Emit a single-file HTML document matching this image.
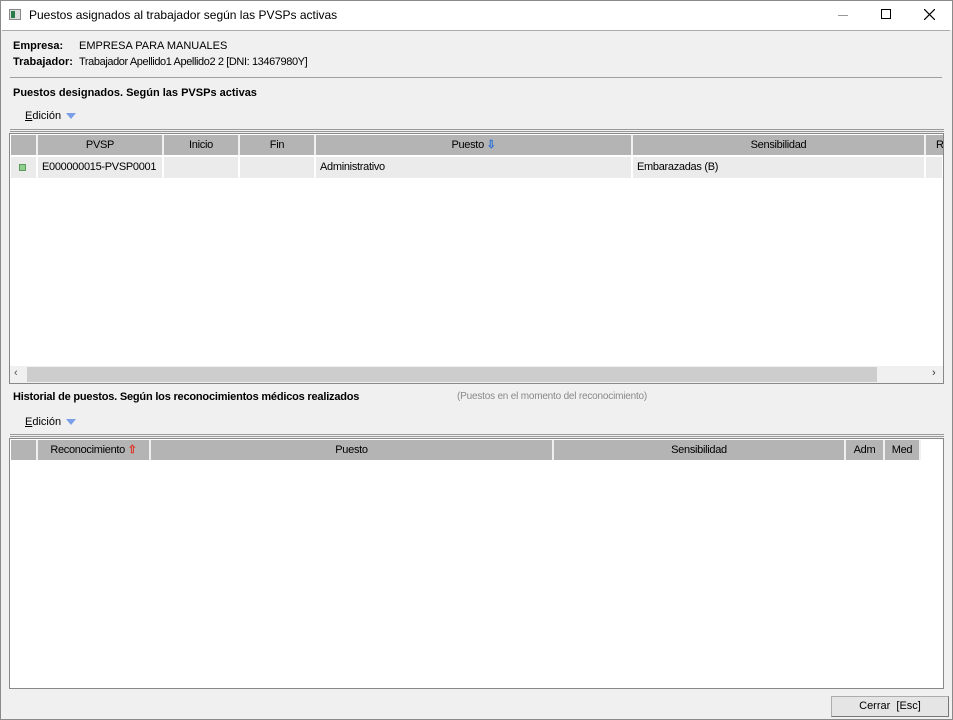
<!DOCTYPE html>
<html><head><meta charset="utf-8"><style>
*{margin:0;padding:0;box-sizing:border-box}
body{width:953px;height:720px;position:relative;background:#f0f0f0;font-family:"Liberation Sans",sans-serif;font-size:11px;color:#000;overflow:hidden}
.a{position:absolute}
.t{white-space:nowrap}
.hd{position:absolute;top:0;height:20px;background:#b4b4b4;border-right:2px solid #f0f0f0;text-align:center;line-height:20px;font-size:11px;letter-spacing:-0.3px;overflow:hidden}
.cell{position:absolute;top:0;height:21px;background:#ebebeb;border-right:2px solid #fff;line-height:21px;padding-left:4px;letter-spacing:-0.3px}
</style></head><body>
<div class="a" style="left:0;top:0;width:953px;height:720px;border:1px solid #8a8a8a"></div>
<div class="a" style="left:1px;top:1px;width:951px;height:29px;background:#fff"></div>
<div class="a" style="left:9px;top:9px;width:12px;height:11px;border:1px solid #888;background:#ddd"></div>
<div class="a" style="left:11px;top:11px;width:4px;height:7px;background:#2a7a4a"></div>
<div class="a t" style="left:29px;top:8px;font-size:12px">Puestos asignados al trabajador según las PVSPs activas</div>
<div class="a" style="left:838px;top:15px;width:10px;height:1px;background:#999"></div>
<div class="a" style="left:881px;top:9px;width:10px;height:10px;border:1px solid #000"></div>
<svg class="a" style="left:924px;top:9px" width="11" height="11"><path d="M0 0L11 11M11 0L0 11" stroke="#000" stroke-width="1.2"/></svg>
<div class="a" style="left:2px;top:30px;width:948px;height:1px;background:#aaa"></div>

<div class="a t" style="left:13px;top:40px;font-weight:bold">Empresa:</div>
<div class="a t" style="left:79px;top:40px">EMPRESA PARA MANUALES</div>
<div class="a t" style="left:13px;top:56px;font-weight:bold">Trabajador:</div>
<div class="a t" style="left:79px;top:56px;letter-spacing:-0.4px">Trabajador Apellido1 Apellido2 2 [DNI: 13467980Y]</div>
<div class="a" style="left:10px;top:77px;width:932px;height:1px;background:#a0a0a0"></div>
<div class="a t" style="left:13px;top:87px;font-weight:bold">Puestos designados. Según las PVSPs activas</div>
<div class="a t" style="left:25px;top:110px"><u>E</u>dición</div>
<div class="a" style="left:66px;top:113px;width:0;height:0;border-left:5px solid transparent;border-right:5px solid transparent;border-top:6px solid #7a9ee8"></div>
<div class="a" style="left:10px;top:129px;width:934px;height:3px;border-top:1px solid #999;border-bottom:1px solid #999"></div>

<div class="a" style="left:9px;top:133px;width:935px;height:251px;background:#fff;border:1px solid #888;overflow:hidden">
 <div class="a" style="left:1px;top:1px;width:932px;height:20px;overflow:hidden">
  <div class="hd" style="left:0;width:27px"></div>
  <div class="hd" style="left:27px;width:126px">PVSP</div>
  <div class="hd" style="left:153px;width:76px">Inicio</div>
  <div class="hd" style="left:229px;width:76px">Fin</div>
  <div class="hd" style="left:305px;width:317px">Puesto <span style="color:#2a6fd6;font-weight:bold">⇩</span></div>
  <div class="hd" style="left:622px;width:293px">Sensibilidad</div>
  <div class="hd" style="left:915px;width:20px;text-align:left;padding-left:10px">RI</div>
 </div>
 <div class="a" style="left:1px;top:23px;width:932px;height:21px;overflow:hidden">
  <div class="cell" style="left:0;width:27px"><div class="a" style="left:8px;top:7px;width:7px;height:7px;background:#8fd08f;border:1px solid #5a9a5a"></div></div>
  <div class="cell" style="left:27px;width:126px">E000000015-PVSP0001</div>
  <div class="cell" style="left:153px;width:76px"></div>
  <div class="cell" style="left:229px;width:76px"></div>
  <div class="cell" style="left:305px;width:317px">Administrativo</div>
  <div class="cell" style="left:622px;width:293px">Embarazadas (B)</div>
  <div class="cell" style="left:915px;width:18px"></div>
 </div>
 <div class="a" style="left:0;top:232px;width:933px;height:17px;background:#f0f0f0">
  <div class="a" style="left:17px;top:1px;width:850px;height:15px;background:#cdcdcd"></div>
  <div class="a t" style="left:4px;top:1px;color:#555">‹</div>
  <div class="a t" style="left:922px;top:1px;color:#333">›</div>
 </div>
</div>

<div class="a t" style="left:13px;top:391px;font-weight:bold;letter-spacing:-0.2px">Historial de puestos. Según los reconocimientos médicos realizados</div>
<div class="a t" style="left:457px;top:391px;color:#888;font-size:10px;letter-spacing:-0.2px">(Puestos en el momento del reconocimiento)</div>
<div class="a t" style="left:25px;top:416px"><u>E</u>dición</div>
<div class="a" style="left:66px;top:419px;width:0;height:0;border-left:5px solid transparent;border-right:5px solid transparent;border-top:6px solid #7a9ee8"></div>
<div class="a" style="left:10px;top:434px;width:934px;height:3px;border-top:1px solid #999;border-bottom:1px solid #999"></div>

<div class="a" style="left:9px;top:438px;width:935px;height:251px;background:#fff;border:1px solid #888">
 <div class="a" style="left:1px;top:1px;width:932px;height:20px">
  <div class="hd" style="left:0;width:27px"></div>
  <div class="hd" style="left:27px;width:113px">Reconocimiento <span style="color:#e03020;font-weight:bold">⇧</span></div>
  <div class="hd" style="left:140px;width:403px">Puesto</div>
  <div class="hd" style="left:543px;width:292px">Sensibilidad</div>
  <div class="hd" style="left:835px;width:39px">Adm</div>
  <div class="hd" style="left:874px;width:36px">Med</div>
 </div>
</div>

<div class="a" style="left:831px;top:696px;width:118px;height:21px;background:#e5e5e5;border:1px solid #adadad;border-right-color:#777;border-bottom-color:#777;text-align:center;line-height:19px">Cerrar&nbsp; [Esc]</div>
</body></html>
